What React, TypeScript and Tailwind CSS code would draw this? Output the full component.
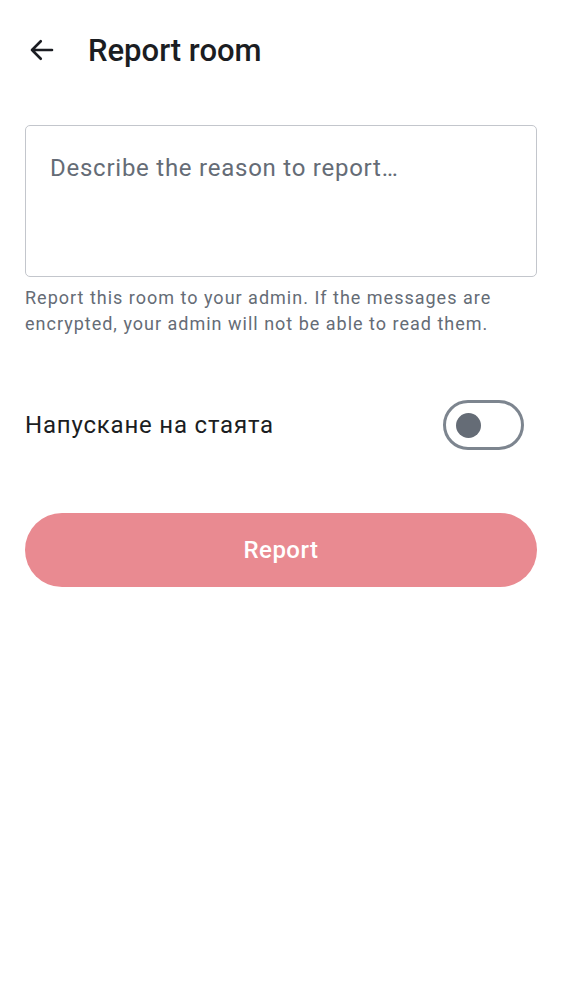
import React from "react"

export default function App() {
  return (
    <main className="min-h-screen w-[562px] bg-white text-[#1b1d22]" style={{ fontFamily: "Roboto, 'Noto Sans', sans-serif" }}>
      <header className="flex h-[100px] items-center pl-[27px]">
        <svg width="30" height="30" viewBox="0 0 24 24" fill="none" stroke="#1b1d22" strokeWidth="2.1" strokeLinecap="round" strokeLinejoin="round">
          <path d="M20 12H4M11 5l-7 7 7 7" />
        </svg>
        <h1 className="ml-[31px] text-[31px] font-medium leading-none">Report room</h1>
      </header>

      <section className="px-[25px] pt-[25px]">
        <div className="h-[152px] rounded-[5px] border border-[#c3c6cc] px-[24px] pt-[26px] text-[24px] leading-[32px] tracking-[0.75px] text-[#656c76]">
          Describe the reason to report…
        </div>
        <p className="mt-[8px] text-[18px] leading-[26px] tracking-[1px] text-[#656c76]">
          Report this room to your admin. If the messages are encrypted, your admin will not be able to read them.
        </p>

        <div className="mt-[63px] flex items-center justify-between pr-[13px]">
          <span className="text-[24px] tracking-[0.8px]">Напускане на стаята</span>
          <div className="flex h-[50px] w-[81px] items-center rounded-full border-[3px] border-[#7d858f] pl-[10px]">
            <div className="h-[25px] w-[25px] rounded-full bg-[#656c76]" />
          </div>
        </div>

        <button className="mt-[63px] flex h-[74px] w-full items-center justify-center rounded-full bg-[#e98a91] text-[24px] font-medium tracking-[0.5px] text-white">
          Report
        </button>
      </section>
    </main>
  )
}
